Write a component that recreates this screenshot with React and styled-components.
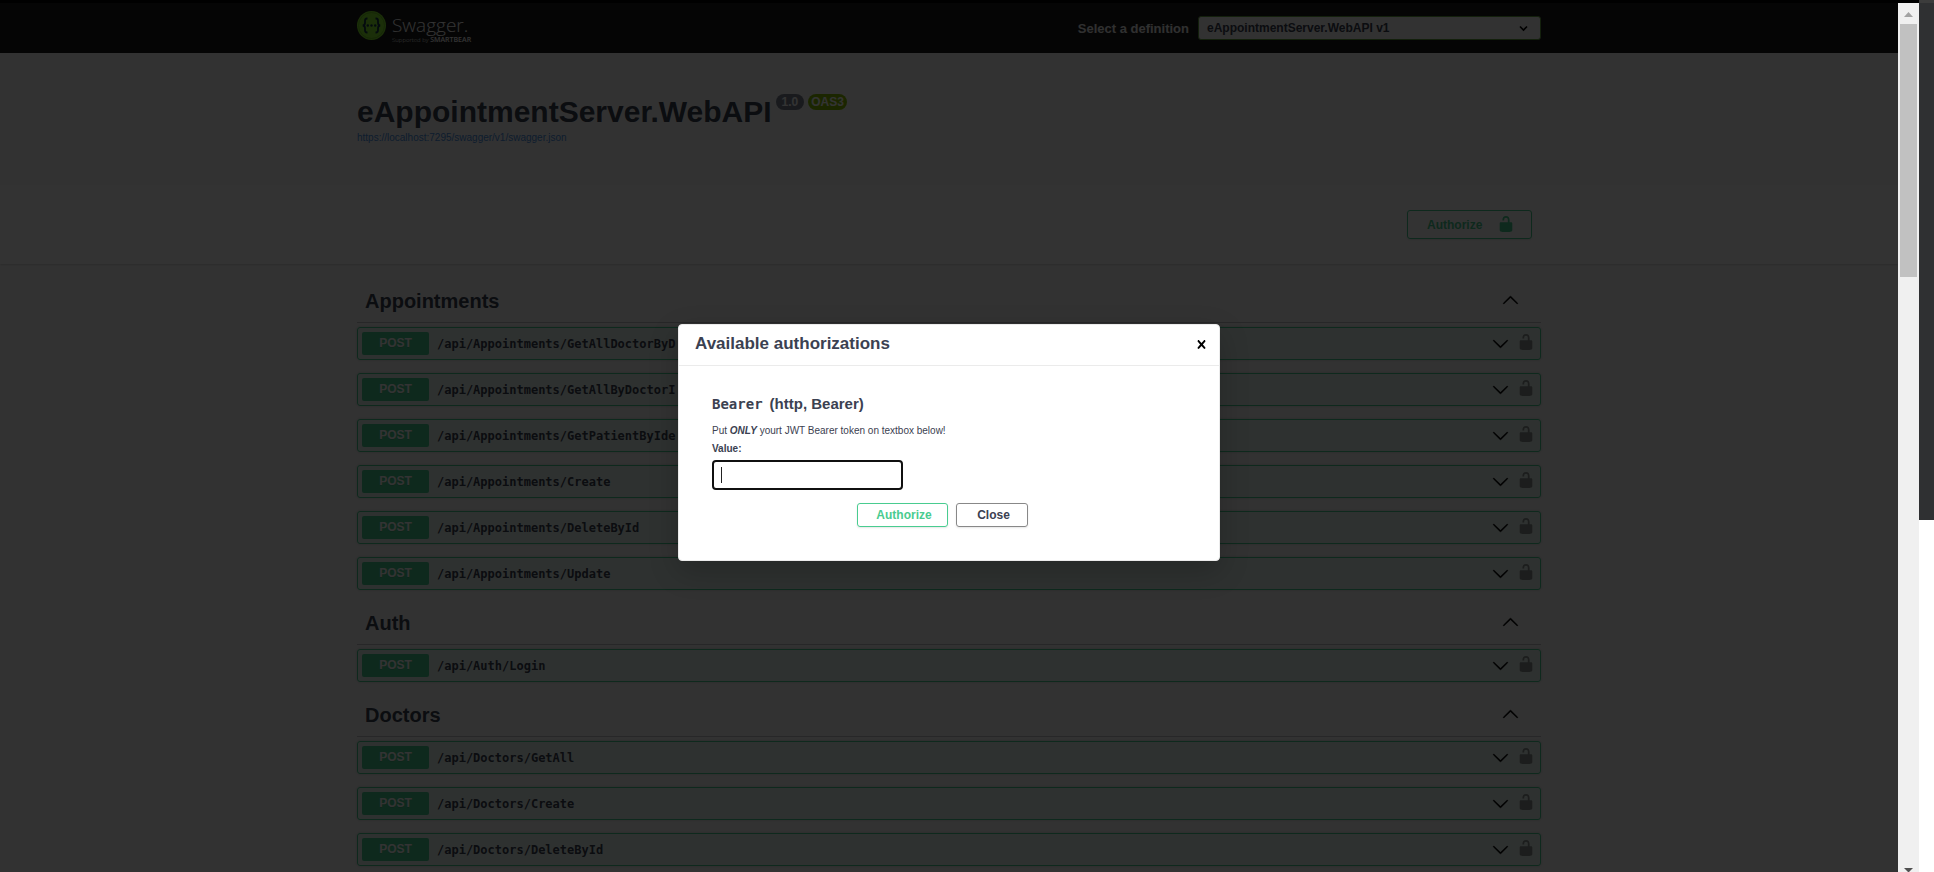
import React, { useState } from "react";
import styled, { createGlobalStyle } from "styled-components";

const sans = `"Liberation Sans", Arial, sans-serif`;
const mono = `"DejaVu Sans Mono", monospace`;
const ink = "#3b4151";
const green = "#49cc90";

const GlobalStyle = createGlobalStyle`
  *, *::before, *::after { box-sizing: border-box; }
  body { margin: 0; font-family: ${sans}; color: ${ink}; background: #fff; }
  button, input, select { font-family: inherit; color: inherit; }
  h1, h2, h3, h4, p { margin: 0; }
`;

const Screen = styled.div`
  display: flex;
  height: 100vh;
  overflow: hidden;
`;

const Browser = styled.div`
  flex: 1;
  min-width: 0;
  display: flex;
  border-top: 3px solid #000;
`;

const Viewport = styled.div`
  flex: 1;
  min-width: 0;
  position: relative;
  overflow: hidden;
  background: #fafafa;
`;

const Wrapper = styled.div`
  width: 100%;
  max-width: 1184px;
  margin: 0 auto;
`;

const TopBar = styled.header`
  background: #1b1b1b;
`;

const TopBarInner = styled(Wrapper)`
  display: flex;
  align-items: center;
  justify-content: space-between;
  height: 50px;
`;

const Logo = styled.a`
  display: flex;
  align-items: flex-start;
  gap: 6px;
  height: 34px;
  color: #fff;
  text-decoration: none;
`;

const LogoText = styled.span`
  display: flex;
  flex-direction: column;
  padding-top: 4px;
`;

const LogoName = styled.span`
  font: 300 19px/20px "Open Sans", sans-serif;
`;

const LogoBy = styled.span`
  font: 300 6px/10px "Open Sans", sans-serif;
  white-space: nowrap;

  b { font-size: 7px; font-weight: 600; }
`;

const Definition = styled.label`
  display: flex;
  align-items: center;
  gap: 9px;
  font-size: 13px;
  font-weight: 700;
  color: #f0f0f0;
`;

const SelectBox = styled.span`
  position: relative;
  display: flex;
  width: 343px;

  svg {
    position: absolute;
    right: 13px;
    top: 9px;
    pointer-events: none;
  }
`;

const Select = styled.select`
  appearance: none;
  width: 100%;
  height: 24px;
  padding: 0 8px;
  border: 1px solid #62a03f;
  border-radius: 3px;
  background: #f7f7f7;
  color: ${ink};
  font-size: 12px;
  font-weight: 700;
`;

const Info = styled(Wrapper)`
  padding: 41px 0 40px;
`;

const TitleLine = styled.div`
  display: flex;
  align-items: flex-start;
  gap: 4px;
`;

const Title = styled.h1`
  font-size: 30px;
  line-height: 36px;
`;

const Badge = styled.span`
  padding: 0 ${(p) => (p.$oas ? 3 : 6)}px;
  border-radius: 8px;
  background: ${(p) => (p.$oas ? "#89bf04" : "#7d8492")};
  color: #fff;
  font-size: 12px;
  font-weight: 700;
  line-height: 16px;
`;

const SpecLink = styled.a`
  display: block;
  width: fit-content;
  margin-top: 1px;
  font-size: 10px;
  line-height: 14px;
  color: #4990e2;
  text-decoration: none;
`;

const SchemeBar = styled.section`
  background: #fff;
  box-shadow: 0 1px 2px rgba(0, 0, 0, 0.15);
  padding: 25px 0;
`;

const SchemeInner = styled(Wrapper)`
  display: flex;
  justify-content: flex-end;
  padding-right: 9px;
`;

const Button = styled.button`
  display: inline-flex;
  align-items: center;
  justify-content: ${(p) => (p.$tall ? "space-between" : "center")};
  width: ${(p) => p.$width}px;
  height: ${(p) => (p.$tall ? 29 : 24)}px;
  padding: 0 16px 0 19px;
  border: 1px solid ${(p) => (p.$accent ? green : "#888")};
  border-radius: 3px;
  background: transparent;
  box-shadow: 0 1px 2px rgba(0, 0, 0, 0.1);
  color: ${(p) => (p.$accent ? green : ink)};
  font-size: 12px;
  font-weight: 700;

  svg { margin-bottom: 2px; }
`;

const Sections = styled(Wrapper)`
  padding-top: 4px;
`;

const Section = styled.section`
  padding-top: 13px;
`;

const TagHeader = styled.div`
  display: flex;
  align-items: center;
  justify-content: space-between;
  height: 42px;
  margin-bottom: 4px;
  padding: 0 22px 2px 8px;
  border-bottom: 1px solid rgba(59, 65, 81, 0.3);
`;

const TagName = styled.h2`
  font-size: 20px;
  line-height: 24px;
`;

const IconButton = styled.button`
  display: flex;
  padding: 0 0 ${(p) => (p.$muted ? 3 : 0)}px;
  border: 0;
  background: none;
  color: ${(p) => (p.$muted ? "rgba(0,0,0,.4)" : "#000")};
`;

const Operations = styled.div`
  display: flex;
  flex-direction: column;
  gap: 13px;
`;

const Operation = styled.div`
  display: flex;
  align-items: center;
  gap: 8px;
  height: 33px;
  padding: 0 5px 0 4px;
  border: 1px solid ${green};
  border-radius: 3px;
  background: rgba(73, 204, 144, 0.1);
  box-shadow: 0 0 3px rgba(0, 0, 0, 0.19);
`;

const Summary = styled.button`
  flex: 1;
  display: flex;
  align-items: center;
  gap: 8px;
  padding: 0;
  border: 0;
  background: none;
  color: #000;
  text-align: left;
`;

const Method = styled.span`
  width: 67px;
  border-radius: 2px;
  background: ${green};
  color: #fff;
  font-size: 12px;
  font-weight: 700;
  line-height: 23px;
  text-align: center;
  text-shadow: 0 1px 0 rgba(0, 0, 0, 0.1);
`;

const Path = styled.span`
  flex: 1;
  color: ${ink};
  font-family: ${mono};
  font-size: 12px;
  font-weight: 700;
`;

const Backdrop = styled.div`
  position: absolute;
  inset: 0;
  display: flex;
  align-items: center;
  justify-content: center;
  padding-top: 10px;
  background: rgba(0, 0, 0, 0.8);
`;

const Dialog = styled.div`
  width: 100%;
  max-width: 542px;
  border: 1px solid #ebebeb;
  border-radius: 4px;
  background: #fff;
  box-shadow: 0 10px 30px rgba(0, 0, 0, 0.2);
`;

const DialogHeader = styled.div`
  display: flex;
  align-items: center;
  justify-content: space-between;
  height: 41px;
  padding: 0 9px 2px 16px;
  border-bottom: 1px solid #ebebeb;
`;

const DialogTitle = styled.h3`
  font-size: 17px;
  line-height: 20px;
  font-weight: 700;
`;

const DialogBody = styled.form`
  padding: 28px 33px;
`;

const SchemeName = styled.h4`
  font-size: 15px;
  line-height: 20px;

  code { font: 700 14px/20px ${mono}; margin-right: 7px; }
`;

const Note = styled.p`
  margin-top: 8px;
  font-size: 10px;
  line-height: 18px;
`;

const FieldLabel = styled.label`
  display: block;
  font-size: 10px;
  font-weight: 700;
  line-height: 18px;
`;

const TokenInput = styled.input`
  display: block;
  width: 191px;
  height: 30px;
  margin-top: 2px;
  padding: 0 7px;
  border: 2px solid #101010;
  border-radius: 4px;
  outline: none;
  background: #fff;
  font-size: 14px;
`;

const Field = styled.div`
  position: relative;
`;

const Caret = styled.span`
  position: absolute;
  left: 9px;
  bottom: 7px;
  width: 1px;
  height: 16px;
  background: #222;
`;

const Actions = styled.div`
  display: flex;
  justify-content: center;
  gap: 8px;
  margin: 13px 13px 5px 0;
`;

const Scrollbar = styled.div`
  width: 21px;
  display: flex;
  flex-direction: column;
  align-items: center;
  justify-content: space-between;
  background: #f0f0f0;
`;

const ScrollTop = styled.div`
  display: flex;
  flex-direction: column;
  align-items: center;
  gap: 7px;
  padding-top: 9px;
`;

const Thumb = styled.div`
  width: 17px;
  height: 253px;
  background: #c1c1c1;
`;

const ScrollArrow = styled.svg`
  display: block;
`;

const SideStrip = styled.div`
  width: 15px;
  background: #fff;
`;

const SidePanel = styled.div`
  height: 520px;
  border-top: 3px solid #3c3c3c;
  background: #2f3032;
`;

const LockIcon = () => (
  <svg width="18" height="18" viewBox="0 0 20 20" fill="currentColor" aria-hidden="true">
    <path d="M15.8 8H14V5.6C14 2.703 12.665 1 10 1 7.334 1 6 2.703 6 5.6V6h2v-.801C8 3.754 8.797 3 10 3c1.203 0 2 .754 2 2.199V8H4c-.553 0-1 .646-1 1.199V17c0 .549.428 1.139.951 1.307l1.197.387C5.672 18.861 6.55 19 7.1 19h5.8c.549 0 1.428-.139 1.951-.307l1.196-.387c.524-.167.953-.757.953-1.306V9.199C17 8.646 16.352 8 15.8 8z" />
  </svg>
);

const ArrowIcon = ({ up }) => (
  <svg width="17" height="17" viewBox="0 0 20 20" fill="currentColor" aria-hidden="true">
    <path
      transform={up ? "rotate(180 10 10)" : undefined}
      stroke="currentColor"
      strokeWidth=".4"
      d="M17.418 6.109c.272-.268.709-.268.979 0s.271.701 0 .969l-7.908 7.83c-.27.268-.707.268-.979 0l-7.908-7.83c-.27-.268-.27-.701 0-.969.271-.268.709-.268.979 0L10 13.25z"
    />
  </svg>
);

const CloseIcon = () => (
  <svg width="17" height="17" viewBox="0 0 20 20" aria-hidden="true">
    <path
      fill="#000"
      d="M14.348 14.849c-.469.469-1.229.469-1.697 0L10 11.819l-2.651 3.029c-.469.469-1.229.469-1.697 0-.469-.469-.469-1.229 0-1.697l2.758-3.15-2.759-3.152c-.469-.469-.469-1.228 0-1.697s1.228-.469 1.697 0L10 8.183l2.651-3.031c.469-.469 1.228-.469 1.697 0s.469 1.229 0 1.697l-2.758 3.152 2.758 3.15c.469.469.469 1.229 0 1.698z"
    />
  </svg>
);

const LogoMark = () => (
  <svg width="29" height="29" viewBox="0 0 29 29" fill="none" aria-hidden="true">
    <circle cx="14.5" cy="14.5" r="14.5" fill="#85ea2d" />
    <circle cx="14.5" cy="14.5" r="13" stroke="#6fc424" />
    <g stroke="#173647" strokeWidth="1.8">
      <path d="M10.5 7.5H10c-1.6 0-2 .8-2 2.2v2c0 1.6-.6 2.6-2.2 2.8 1.6.2 2.2 1.2 2.2 2.8v2c0 1.4.4 2.2 2 2.2h.5" />
      <path d="M18.5 7.5h.5c1.6 0 2 .8 2 2.2v2c0 1.6.6 2.6 2.2 2.8-1.6.2-2.2 1.2-2.2 2.8v2c0 1.4-.4 2.2-2 2.2h-.5" />
    </g>
    <g fill="#173647">
      <circle cx="10.8" cy="14.5" r="1.2" />
      <circle cx="14.5" cy="14.5" r="1.2" />
      <circle cx="18.2" cy="14.5" r="1.2" />
    </g>
  </svg>
);

const tags = [
  {
    name: "Appointments",
    paths: [
      "/api/Appointments/GetAllDoctorByD",
      "/api/Appointments/GetAllByDoctorI",
      "/api/Appointments/GetPatientByIde",
      "/api/Appointments/Create",
      "/api/Appointments/DeleteById",
      "/api/Appointments/Update",
    ],
  },
  { name: "Auth", paths: ["/api/Auth/Login"] },
  {
    name: "Doctors",
    paths: ["/api/Doctors/GetAll", "/api/Doctors/Create", "/api/Doctors/DeleteById"],
  },
];

export default function App() {
  const [token, setToken] = useState("");

  return (
    <Screen>
      <GlobalStyle />
      <Browser>
        <Viewport>
          <TopBar>
            <TopBarInner>
              <Logo href="#">
                <LogoMark />
                <LogoText>
                  <LogoName>Swagger.</LogoName>
                  <LogoBy>
                    Supported by <b>SMARTBEAR</b>
                  </LogoBy>
                </LogoText>
              </Logo>
              <Definition>
                Select a definition
                <SelectBox>
                  <Select>
                    <option>eAppointmentServer.WebAPI v1</option>
                  </Select>
                  <svg width="9" height="7" viewBox="0 0 9 7" fill="none" aria-hidden="true">
                    <path d="M1 1.5l3.5 3.5L8 1.5" stroke="#000" strokeWidth="1.6" />
                  </svg>
                </SelectBox>
              </Definition>
            </TopBarInner>
          </TopBar>

          <Info>
            <TitleLine>
              <Title>eAppointmentServer.WebAPI</Title>
              <Badge>1.0</Badge>
              <Badge $oas>OAS3</Badge>
            </TitleLine>
            <SpecLink href="#">https://localhost:7295/swagger/v1/swagger.json</SpecLink>
          </Info>

          <SchemeBar>
            <SchemeInner>
              <Button type="button" $accent $tall $width={125}>
                Authorize
                <LockIcon />
              </Button>
            </SchemeInner>
          </SchemeBar>

          <Sections>
            {tags.map((tag) => (
              <Section key={tag.name}>
                <TagHeader>
                  <TagName>{tag.name}</TagName>
                  <IconButton type="button" aria-label={`Collapse ${tag.name}`}>
                    <ArrowIcon up />
                  </IconButton>
                </TagHeader>
                <Operations>
                  {tag.paths.map((path) => (
                    <Operation key={path}>
                      <Summary type="button">
                        <Method>POST</Method>
                        <Path>{path}</Path>
                        <ArrowIcon />
                      </Summary>
                      <IconButton type="button" $muted aria-label="Authorization">
                        <LockIcon />
                      </IconButton>
                    </Operation>
                  ))}
                </Operations>
              </Section>
            ))}
          </Sections>

          <Backdrop>
            <Dialog role="dialog" aria-modal="true" aria-labelledby="auth-title">
              <DialogHeader>
                <DialogTitle id="auth-title">Available authorizations</DialogTitle>
                <IconButton type="button" aria-label="Dismiss">
                  <CloseIcon />
                </IconButton>
              </DialogHeader>
              <DialogBody onSubmit={(e) => e.preventDefault()}>
                <SchemeName>
                  <code>Bearer</code>(http, Bearer)
                </SchemeName>
                <Note>
                  Put{" "}
                  <b>
                    <i>ONLY</i>
                  </b>{" "}
                  yourt JWT Bearer token on textbox below!
                </Note>
                <FieldLabel htmlFor="token">Value:</FieldLabel>
                <Field>
                  <TokenInput
                    id="token"
                    type="text"
                    value={token}
                    onChange={(e) => setToken(e.target.value)}
                  />
                  {token === "" && <Caret />}
                </Field>
                <Actions>
                  <Button type="submit" $accent $width={91}>
                    Authorize
                  </Button>
                  <Button type="button" $width={72}>
                    Close
                  </Button>
                </Actions>
              </DialogBody>
            </Dialog>
          </Backdrop>
        </Viewport>

        <Scrollbar aria-hidden="true">
          <ScrollTop>
            <ScrollArrow width="9" height="5" viewBox="0 0 9 5">
              <path d="M0 5L4.5 0L9 5z" fill="#a3a3a3" />
            </ScrollArrow>
            <Thumb />
          </ScrollTop>
          <ScrollArrow width="9" height="4" viewBox="0 0 9 4">
            <path d="M0 0H9L5 4H4z" fill="#505050" />
          </ScrollArrow>
        </Scrollbar>
      </Browser>
      <SideStrip>
        <SidePanel />
      </SideStrip>
    </Screen>
  );
}
